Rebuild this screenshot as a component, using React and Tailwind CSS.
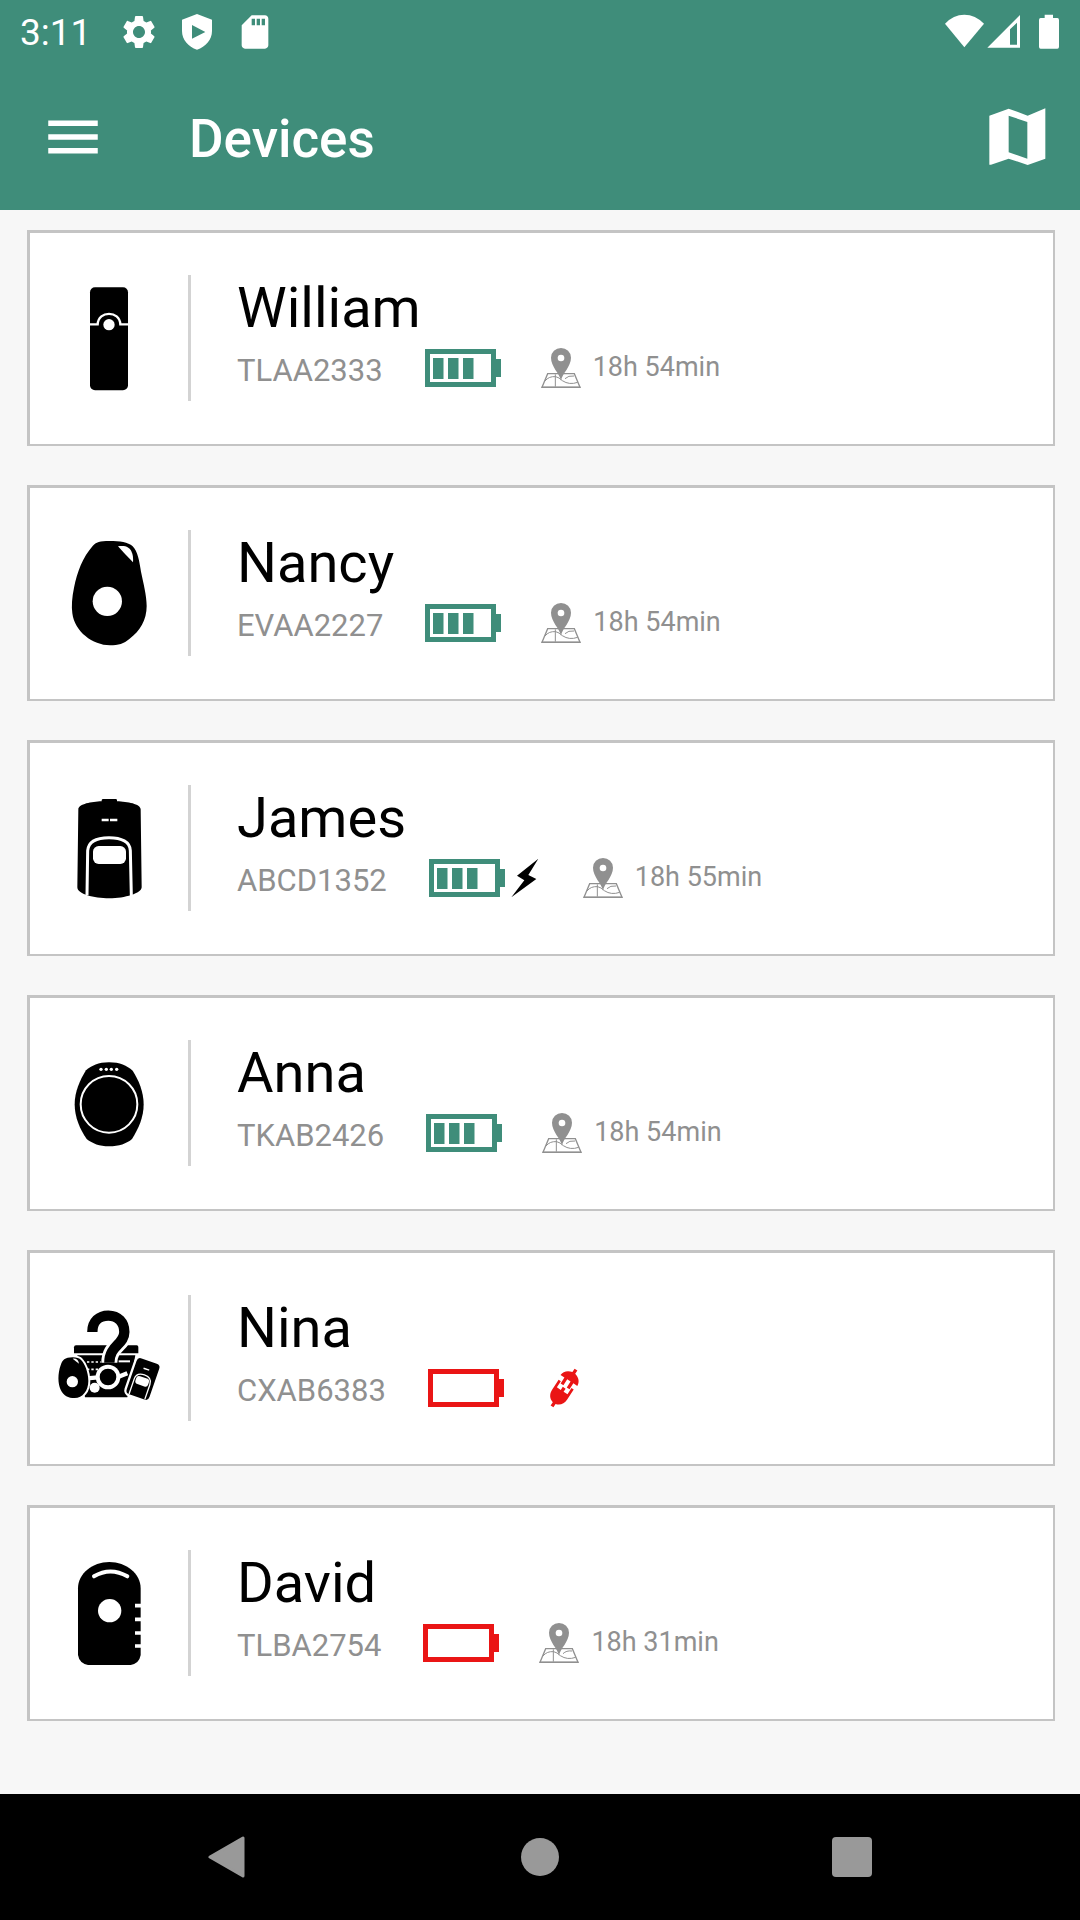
import { MdMenu, MdSettings, MdSdCard } from 'react-icons/md';

const devices = [
    { name: 'William', id: 'TLAA2333', icon: 'tracker', battery: 3, lastSeen: '18h 54min' },
    { name: 'Nancy', id: 'EVAA2227', icon: 'pendant', battery: 3, lastSeen: '18h 54min' },
    { name: 'James', id: 'ABCD1352', icon: 'fob', battery: 3, charging: true, lastSeen: '18h 55min' },
    { name: 'Anna', id: 'TKAB2426', icon: 'watch', battery: 3, lastSeen: '18h 54min' },
    { name: 'Nina', id: 'CXAB6383', icon: 'unknown', battery: 0, offline: true },
    { name: 'David', id: 'TLBA2754', icon: 'beacon', battery: 0, lastSeen: '18h 31min' },
];

/* ── Device silhouettes ── */
const silhouettes = {
    tracker: {
        viewBox: '90 129 360 450',
        shape: (
            <>
                <rect x="210" y="202" width="114" height="309" rx="15" />
                <path d="M210 313H233C235 271 299 271 301 313H324" fill="none" stroke="#fff" strokeWidth="7" />
                <circle cx="267" cy="314" r="17" fill="#fff" />
            </>
        ),
    },
    pendant: {
        viewBox: '0 -6 360 450',
        shape: (
            <>
                <path d="M178 63C150 63 138 66 128 78C98 112 82 155 72 203C66 232 64 258 67 280C74 335 128 376 180 376C205 376 222 371 238 357C270 333 290 300 290 258C290 225 280 190 273 155C268 125 264 95 248 79C234 66 210 63 178 63Z" />
                <circle cx="172" cy="244" r="44" fill="#fff" />
                <path d="M204 79C228 76 238 82 244 94C249 104 250 115 249 127Q225 103 204 79Z" fill="#fff" />
            </>
        ),
    },
    fob: {
        viewBox: '0 -21 360 450',
        shape: (
            <>
                <path d="M155 64V61Q155 57 160 57H197Q201 57 201 61V64C232 65 272 72 272 88L275 322C275 340 225 355 178 355C131 355 82 342 82 322L85 88C86 72 125 65 155 64Z" />
                <path d="M155 120H176M180 120H202" stroke="#fff" strokeWidth="7" />
                <path d="M111 346L113 212C115 186 139 173 177 173C215 173 240 186 241 212L244 348" fill="none" stroke="#fff" strokeWidth="9" />
                <rect x="129" y="198" width="99" height="54" rx="17" fill="#fff" />
            </>
        ),
    },
    watch: {
        viewBox: '0 -36 360 450',
        shape: (
            <>
                <path d="M177 67C145 67 125 77 108 91C90 120 74 155 74 193C74 232 90 268 110 297C128 311 148 319 177 319C207 319 230 311 246 297C266 265 281 232 281 193C281 155 265 118 248 92C230 77 210 67 177 67Z" />
                <circle cx="177" cy="193" r="85" fill="none" stroke="#fff" strokeWidth="6" />
                <g fill="#fff">
                    <circle cx="153" cy="88" r="5" />
                    <circle cx="169" cy="88" r="5" />
                    <circle cx="184" cy="88" r="5" />
                    <circle cx="200" cy="88" r="5" />
                </g>
            </>
        ),
    },
    unknown: {
        viewBox: '30 -21 360 450',
        shape: (
            <>
                <path d="M108 166H290Q295 166 295 171V190H102V172Q102 166 108 166Z" />
                <path d="M112 196H286L262 322H135Z" />
                <path d="M141 216H182M141 238H182" stroke="#fff" strokeWidth="5" strokeDasharray="7 6" />
                <path d="M236 214H270" stroke="#fff" strokeWidth="6" />
                <circle cx="164" cy="293" r="15" fill="#fff" />
                <path d="M140 265L175 262M232 262L262 250" stroke="#fff" strokeWidth="13" />
                <path d="M157 126C157 94 178 77 205 77C234 77 253 97 253 126C253 164 208 166 208 218" fill="none" stroke="#fff" strokeWidth="48" />
                <circle cx="204" cy="261" r="37" fill="#fff" />
                <path d="M157 126C157 94 178 77 205 77C234 77 253 97 253 126C253 164 208 166 208 218" fill="none" stroke="#000" strokeWidth="31" />
                <circle cx="204" cy="261" r="25" />
                <path d="M98 202C74 202 67 210 62 226C53 250 53 282 62 299C70 317 85 324 104 324C128 324 145 302 145 273C145 246 134 222 124 211C118 204 110 202 98 202Z" stroke="#fff" strokeWidth="12" paintOrder="stroke" />
                <circle cx="97" cy="275" r="17" fill="#fff" />
                <path d="M98 206Q114 204 117 221Z" fill="#fff" />
                <g transform="rotate(19 309 267)">
                    <rect x="273" y="210" width="72" height="114" rx="12" stroke="#fff" strokeWidth="14" paintOrder="stroke" />
                    <path d="M300 236H318" stroke="#fff" strokeWidth="4" />
                    <path d="M284 323V276Q284 254 309 254Q334 254 334 276V323" fill="none" stroke="#fff" strokeWidth="4" />
                    <rect x="289" y="262" width="40" height="25" rx="9" fill="#fff" />
                </g>
            </>
        ),
    },
    beacon: {
        viewBox: '0 -6 360 450',
        shape: (
            <>
                <path d="M84 145C84 101 127 66 178 66C229 66 272 101 272 145V345Q268 370 242 375H114Q88 370 84 345Z" />
                <path d="M132 109Q181 80 232 109" fill="none" stroke="#fff" strokeWidth="12" strokeLinecap="round" />
                <circle cx="179" cy="212" r="35" fill="#fff" />
                <path d="M255 197H273M255 238H273M255 279H273M255 318H273" stroke="#fff" strokeWidth="11" />
            </>
        ),
    },
};

function DeviceIcon({ type }) {
    const { viewBox, shape } = silhouettes[type];
    return (
        <svg viewBox={viewBox} className="w-[120px] h-[150px] shrink-0" aria-hidden="true">
            {shape}
        </svg>
    );
}

function BatteryIcon({ level }) {
    const color = level > 0 ? '#3f8d7a' : '#ea1515';
    return (
        <svg viewBox="0 0 76 38" className="w-[76px] h-[38px] shrink-0" role="img" aria-label={`Battery ${level} of 4`}>
            <rect x="2.5" y="2.5" width="66" height="33" fill="none" stroke={color} strokeWidth="5" />
            <rect x="71" y="10" width="5" height="18" fill={color} />
            {Array.from({ length: level }, (_, i) => (
                <rect key={i} x={8 + i * 15} y="9" width="10.5" height="21" fill={color} />
            ))}
        </svg>
    );
}

function BoltIcon() {
    return (
        <svg viewBox="332 54 84 120" className="w-7 h-10 shrink-0" role="img" aria-label="Charging">
            <path d="M414 56L350 107L372 121L333 172L408 117L384 105Z" />
        </svg>
    );
}

function PinIcon() {
    return (
        <svg viewBox="420 84 120 120" className="w-10 h-10 shrink-0" fill="none" stroke="#909090" aria-hidden="true">
            <path d="M440 161H520L537 202H423Z" strokeWidth="4" />
            <path d="M422 202H538" strokeWidth="5" />
            <path d="M432 183Q444 168 464 170Q474 172 484 182Q505 196 530 187M463 163V200M492 176Q502 166 519 168" strokeWidth="3" />
            <path d="M480 182C476 160 450 140 450 113A30 29 0 0 1 510 113C510 140 484 160 480 182Z" fill="#909090" stroke="none" />
            <circle cx="480" cy="114" r="10" fill="#fff" stroke="none" />
        </svg>
    );
}

function UnpluggedIcon() {
    return (
        <svg viewBox="-60 -60 120 120" className="w-10 h-10 shrink-0" role="img" aria-label="Disconnected">
            <g transform="rotate(33)" fill="#ea1515">
                <path d="M-5 -66H5V-54C20 -51 30 -40 30 -27H16V-6H6V-27H-6V-6H-16V-27H-30C-30 -40 -20 -51 -5 -54Z" />
                <path d="M-27 -12H-19V10H-5V-1H5V10H19V-12H27V24C27 40 18 51 5 54V66H-5V54C-18 51 -27 40 -27 24Z" />
            </g>
        </svg>
    );
}

function StatusBar() {
    return (
        <div className="flex items-center h-[63px] pl-5 pr-5">
            <span className="text-[37px] leading-10 pt-0.5 mr-7">3:11</span>
            <div className="flex items-center gap-[18px]">
                <MdSettings size={40} />
                <svg viewBox="534 35 120 120" className="size-10" aria-hidden="true">
                    <path fillRule="evenodd" fill="currentColor" d="M594 41L639 58V92C639 118 620 140 594 148C568 140 549 118 549 92V58ZM579 74V115L619 95Z" />
                </svg>
                <MdSdCard size={40} />
            </div>
            <svg viewBox="135 40 345 105" className="w-[115px] h-[35px] ml-auto" fill="currentColor" role="img" aria-label="Wifi, signal and battery">
                <path d="M193 140L135 69Q160 42 193 42Q226 42 252 69Z" />
                <path fillRule="evenodd" d="M262 141L360 43V141ZM330 86V132H351V66Z" />
                <path d="M434 52V42H459V52H472Q477 52 477 58V138Q477 144 472 144H422Q417 144 417 138V58Q417 52 422 52Z" />
            </svg>
        </div>
    );
}

function DeviceCard({ device }) {
    return (
        <li className="flex items-center bg-white border-[#c4c4c4] border-t-3 border-l-3 border-b-2 border-r-2 pt-[30px] pb-[31px] pl-5">
            <DeviceIcon type={device.icon} />
            <div className="w-[3px] h-[126px] ml-[18px] mr-[46px] bg-[#d3d3d3]" />
            <div className="pb-3">
                <h2 className="text-[56px] leading-16 text-black">{device.name}</h2>
                <div className="flex items-center h-10 mt-2 text-[#909090]">
                    <span className="text-[31px] leading-10 pt-1.5 mr-[42px]">{device.id}</span>
                    <BatteryIcon level={device.battery} />
                    {device.charging && <div className="ml-1.5 mr-1"><BoltIcon /></div>}
                    <div className="flex items-center gap-3 ml-10">
                        {device.offline ? <UnpluggedIcon /> : <PinIcon />}
                        {device.lastSeen && <span className="text-[27px] leading-8 pb-0.5">{device.lastSeen}</span>}
                    </div>
                </div>
            </div>
        </li>
    );
}

export default function App() {
    return (
        <div className="flex flex-col min-h-screen bg-[#f7f7f7] font-[Roboto,sans-serif]">
            <header className="bg-[#3f8d7a] text-white">
                <StatusBar />
                <div className="flex items-center h-[147px] pl-10 pr-[34px]">
                    <button aria-label="Open menu" className="mr-[83px]"><MdMenu size={66} /></button>
                    <h1 className="text-[53px] leading-16 font-medium pt-1">Devices</h1>
                    <button aria-label="Show map" className="ml-auto">
                        <svg viewBox="266 322 171 171" className="size-[57px]" fill="currentColor">
                            <path fillRule="evenodd" d="M267 345L325 324L382 345L435 323V474L382 493L325 474L272 492H267ZM325 345V455L381 474V364Z" />
                        </svg>
                    </button>
                </div>
            </header>

            <main className="flex-1 pt-5 pb-10 pl-[27px] pr-[25px]">
                <ul className="flex flex-col gap-[39px]">
                    {devices.map((device) => <DeviceCard key={device.id} device={device} />)}
                </ul>
            </main>

            <nav className="flex items-center justify-center gap-[272px] h-[126px] bg-black text-[#999]">
                <button aria-label="Back">
                    <svg viewBox="0 0 40 44" className="w-10 h-11" fill="currentColor" stroke="currentColor" strokeWidth="3" strokeLinejoin="round">
                        <path d="M2 22L35 3V41Z" />
                    </svg>
                </button>
                <button aria-label="Home" className="size-10">
                    <span className="block size-[38px] mx-auto rounded-full bg-[#999]" />
                </button>
                <button aria-label="Recent apps" className="size-10 rounded-sm bg-[#999]" />
            </nav>
        </div>
    );
}
